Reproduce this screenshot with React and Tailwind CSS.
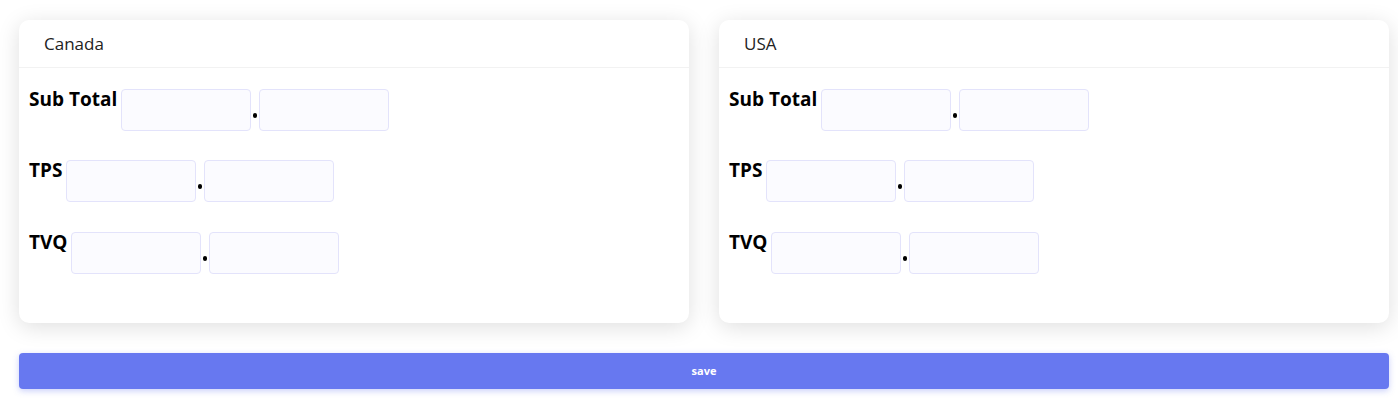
import React from "react";

function Row({ label }) {
  return (
    <div className="flex items-start">
      <span className="text-[19px] font-bold leading-none text-black mt-[1px]">{label}</span>
      <input className="ml-1 w-[130px] h-[42px] rounded-[4px] border border-[#e3e3fb] bg-[#fbfbff] outline-none" />
      <span className="w-[8px] flex justify-center">
        <span className="mt-[24px] w-[4px] h-[5px] rounded-full bg-black"></span>
      </span>
      <input className="w-[130px] h-[42px] rounded-[4px] border border-[#e3e3fb] bg-[#fbfbff] outline-none" />
    </div>
  );
}

function Card({ title }) {
  return (
    <div className="w-[670px] rounded-[10px] bg-white shadow-[0_4px_22px_rgba(0,0,0,0.13)]">
      <div className="h-12 flex items-center pl-[25px] border-b border-[#f2f2f2] text-[17px] text-[#222]">
        {title}
      </div>
      <div className="pt-[21px] pb-[49px] px-[10px] flex flex-col gap-[29.4px]">
        <Row label="Sub Total" />
        <Row label="TPS" />
        <Row label="TVQ" />
      </div>
    </div>
  );
}

export default function App() {
  return (
    <div
      className="min-h-[409px] bg-white pl-[19px] pr-[9px] pt-5"
      style={{ fontFamily: "'Open Sans', 'Noto Sans', sans-serif" }}
    >
      <div className="flex gap-[30px]">
        <Card title="Canada" />
        <Card title="USA" />
      </div>
      <button className="mt-[30px] w-full h-9 rounded-[4px] bg-[#6778f0] text-white text-[11px] font-bold shadow-[0_2px_6px_rgba(103,120,240,0.35)]">
        save
      </button>
    </div>
  );
}
